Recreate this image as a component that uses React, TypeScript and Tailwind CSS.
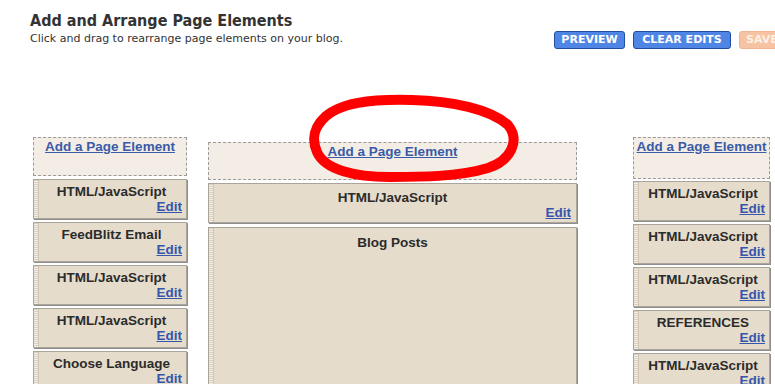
import React from "react";

const ARIAL = { fontFamily: '"Liberation Sans", Arial, sans-serif' };

function Grip() {
  return (
    <div className="w-[5px] shrink-0 self-stretch border-r border-[#cfc6b6] bg-[repeating-linear-gradient(0deg,#f4efe6_0px,#f4efe6_1px,#d9d0c0_1px,#d9d0c0_2px)]" />
  );
}

function Widget({ title, tall = false, pt = "pt-[4px]" }: { title: string; tall?: boolean; pt?: string }) {
  return (
    <div
      className={`flex bg-[#e6dccb] border border-[#aaa49a] shadow-[1px_1px_0_#8e8e8e] ${tall ? "h-[170px]" : "h-[40px]"}`}
    >
      <Grip />
      <div className={`flex-1 flex flex-col ${pt} pr-[5px]`}>
        <div className="text-center text-[13.5px] leading-[15px] font-bold text-[#2b2b2b]">{title}</div>
        {!tall && (
          <div className="text-right text-[13.5px] leading-[15px] font-bold text-[#3556ad] underline mt-auto mb-[4px]">
            Edit
          </div>
        )}
      </div>
    </div>
  );
}

function SideWidget({ title }: { title: string }) {
  return (
    <div className="flex bg-[#e6dccb] border border-[#aaa49a] shadow-[1px_1px_0_#8e8e8e] h-[40px]">
      <Grip />
      <div className="flex-1 flex flex-col pt-[5px] pr-[4px]">
        <div className="text-center text-[13.5px] leading-[14px] font-bold text-[#2b2b2b] pl-[2px] whitespace-nowrap">{title}</div>
        <div className="text-right text-[13.5px] leading-[15px] font-bold text-[#3556ad] underline">Edit</div>
      </div>
    </div>
  );
}

function AddBox({ h }: { h: string }) {
  return (
    <div className={`${h} border border-dashed border-[#9a9a9a] bg-[#f4ede5] text-center`}>
      <div className="text-[13.5px] leading-[11px] pt-[3px] font-bold text-[#3a5ba8] underline whitespace-nowrap">
        Add a Page Element
      </div>
    </div>
  );
}

export default function App() {
  const left = ["HTML/JavaScript", "FeedBlitz Email", "HTML/JavaScript", "HTML/JavaScript", "Choose Language"];
  const right = ["HTML/JavaScript", "HTML/JavaScript", "HTML/JavaScript", "REFERENCES", "HTML/JavaScript"];
  return (
    <div className="relative w-[775px] h-[384px] overflow-hidden bg-white" style={ARIAL}>
      {/* Header */}
      <div className="flex">
        <div className="w-[554px] shrink-0 pl-[30px] pt-[10px]">
          <div className="text-[16px] leading-[22px] font-bold text-[#333]" style={{ fontFamily: '"DejaVu Sans Condensed", "DejaVu Sans", sans-serif' }}>
            Add and Arrange Page Elements
          </div>
          <div className="text-[11px] leading-[14px] text-[#333]" style={{ fontFamily: '"DejaVu Sans", Verdana, sans-serif' }}>
            Click and drag to rearrange page elements on your blog.
          </div>
        </div>
        <div
          className="flex gap-[8px] pt-[31px] shrink-0"
          style={{ fontFamily: '"DejaVu Sans", Verdana, sans-serif' }}
        >
          <div className="h-[18px] w-[71px] rounded-[3px] bg-[#4f86e6] border border-[#1f4fa0] text-white text-[11px] font-bold leading-[16px] text-center">
            PREVIEW
          </div>
          <div className="h-[18px] w-[98px] rounded-[3px] bg-[#4f86e6] border border-[#1f4fa0] text-white text-[11px] font-bold leading-[16px] text-center">
            CLEAR EDITS
          </div>
          <div className="h-[18px] w-[50px] rounded-[3px] bg-[#f6c4a3] border border-[#efb48c] text-[#fdf0e6] text-[11px] font-bold leading-[16px] pl-[6px]">
            SAVE
          </div>
        </div>
      </div>

      {/* Columns */}
      <div className="flex mt-[88px]">
        <div className="ml-[33px] w-[154px] shrink-0 flex flex-col">
          <AddBox h="h-[39px]" />
          <div className="flex flex-col gap-[3px] mt-[3px]">
            {left.map((t, i) => (
              <SideWidget key={i} title={t} />
            ))}
          </div>
        </div>
        <div className="ml-[21px] w-[369px] shrink-0 flex flex-col mt-[5px]">
          <AddBox h="h-[38px]" />
          <div className="flex flex-col gap-[4px] mt-[3px]">
            <Widget title="HTML/JavaScript" pt="pt-[6px]" />
            <Widget title="Blog Posts" tall pt="pt-[7px]" />
          </div>
        </div>
        <div className="ml-[56px] w-[137px] shrink-0 flex flex-col">
          <AddBox h="h-[42px]" />
          <div className="flex flex-col gap-[3px] mt-[2px]">
            {right.map((t, i) => (
              <SideWidget key={i} title={t} />
            ))}
          </div>
        </div>
      </div>

      {/* Red hand-drawn ellipse */}
      <svg
        className="absolute left-0 top-0 pointer-events-none"
        width="775"
        height="384"
        viewBox="0 0 775 384"
      >
        <path
          d="M 322 120 C 338 102, 372 99, 412 100 C 452 101, 490 109, 508 125 C 520 140, 512 160, 488 168 C 458 177, 420 177, 390 177 C 355 177, 325 170, 317 152 C 311 138, 314 127, 326 116"
          fill="none"
          stroke="#ff0000"
          strokeWidth="10"
          strokeLinecap="round"
          strokeLinejoin="round"
        />
      </svg>
    </div>
  );
}
